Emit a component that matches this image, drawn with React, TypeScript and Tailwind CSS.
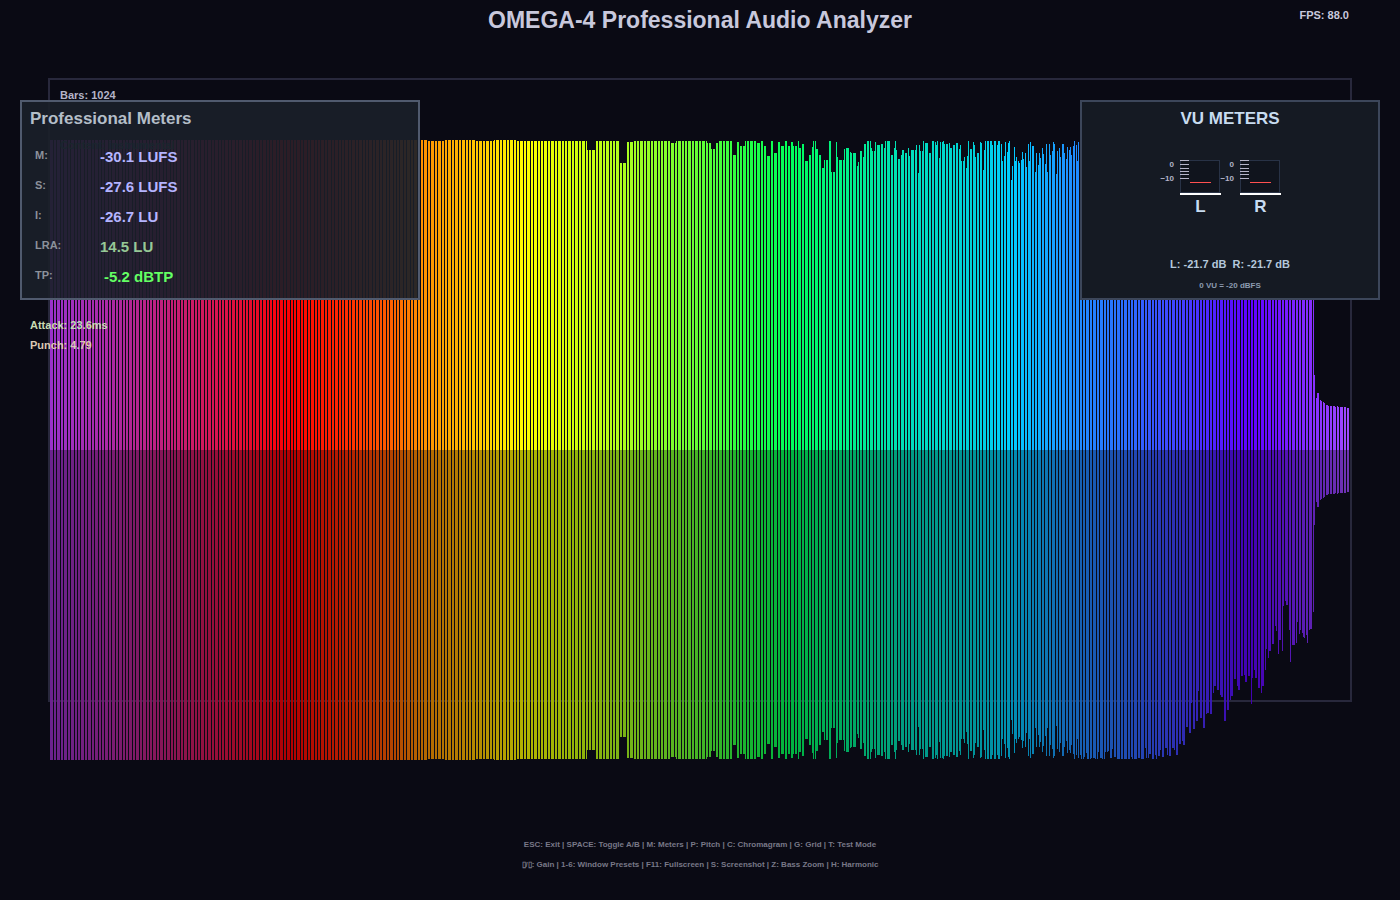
import React from "react";

type Step = [number, number];

const CHART_WIDTH = 1300;
const CENTER = 310;
const BAR_STEP = 1300 / 921;

// Bar heights as [first x, distance below the chart's top]; each holds until the next entry.
const PROFILE: Step[] = [
  [0, 0], [378, 1], [394, 0], [426, 1], [444, 0], [467, 1], [537, 10], [545, 1], [569, 23], [576, 2], [583, 1], [620, 3], [626, 1],
  [657, 3], [661, 9], [665, 3], [669, 1], [682, 15], [686, 2], [690, 6], [695, 1], [706, 3], [710, 1], [713, 6],
  [717, 16], [720, 1], [724, 13], [727, 2], [730, 6], [734, 1], [737, 6], [741, 2], [743, 6], [747, 1], [749, 8],
  [752, 4], [755, 21], [758, 15], [761, 7], [763, 1], [766, 9], [768, 15], [771, 28], [774, 20], [778, 15],
  [779, 1], [781, 32], [785, 2], [787, 17], [789, 20], [794, 9], [796, 8], [799, 12], [801, 13], [806, 26],
  [808, 22], [810, 11], [813, 17], [814, 4], [817, 1], [821, 8], [822, 11], [825, 2], [827, 5], [830, 4],
  [834, 8], [835, 1], [841, 15], [844, 8], [845, 1], [846, 10], [848, 19], [851, 15], [852, 10], [854, 13],
  [857, 17], [858, 8], [859, 16], [861, 10], [864, 13], [865, 10], [866, 5], [868, 33], [869, 5], [870, 11],
  [873, 1], [874, 3], [878, 2], [879, 13], [881, 4], [882, 1], [885, 2], [886, 5], [887, 1], [889, 18], [890, 2],
  [893, 1], [894, 4], [898, 13], [899, 3], [900, 8], [903, 5], [906, 3], [909, 9], [910, 5], [911, 21], [914, 17],
  [916, 28], [917, 16], [918, 1], [920, 9], [922, 2], [924, 5], [925, 17], [926, 13], [929, 2], [931, 3],
  [932, 30], [934, 10], [935, 1], [942, 5], [944, 1], [946, 5], [948, 1], [951, 4], [952, 21], [953, 16],
  [955, 2], [956, 12], [958, 3], [959, 1], [960, 40], [962, 26], [963, 7], [965, 21], [966, 17], [967, 21],
  [969, 23], [970, 20], [972, 12], [973, 19], [975, 13], [976, 27], [977, 4], [979, 21], [980, 2], [982, 6],
  [984, 32], [986, 13], [987, 25], [989, 13], [990, 18], [991, 8], [993, 14], [994, 24], [996, 4], [997, 32],
  [998, 4], [1000, 15], [1001, 11], [1003, 2], [1004, 4], [1005, 34], [1007, 11], [1008, 8], [1010, 17],
  [1011, 1], [1012, 4], [1014, 13], [1015, 19], [1017, 7], [1018, 10], [1020, 7], [1021, 15], [1022, 6],
  [1024, 1], [1025, 5], [1027, 21], [1028, 2], [1029, 5], [1031, 1], [1034, 3], [1035, 7], [1037, 1], [1041, 2],
  [1045, 1], [1048, 8], [1049, 2], [1052, 1], [1055, 8], [1058, 9], [1059, 2], [1062, 11], [1063, 3], [1066, 1],
  [1073, 1], [1080, 3], [1082, 1], [1087, 7], [1088, 2], [1091, 1], [1095, 12], [1096, 2], [1099, 6], [1101, 1],
  [1104, 5], [1106, 1], [1108, 4],
  [1110, 10], [1111, 7], [1112, 3], [1114, 13], [1115, 12], [1117, 5], [1118, 13], [1119, 4], [1121, 8],
  [1122, 12], [1124, 10], [1125, 2], [1126, 5], [1128, 17], [1129, 16], [1131, 13], [1132, 19], [1133, 15],
  [1135, 20], [1136, 33], [1138, 22], [1139, 27], [1141, 57], [1142, 21], [1143, 31], [1145, 34], [1146, 39],
  [1148, 69], [1149, 55], [1150, 42], [1152, 52], [1153, 32], [1155, 43], [1156, 46], [1157, 47], [1159, 31],
  [1160, 46], [1162, 65], [1163, 67], [1164, 74], [1166, 75], [1167, 70], [1169, 87], [1170, 65], [1171, 63],
  [1173, 54], [1174, 39], [1176, 44], [1177, 50], [1180, 60], [1181, 64], [1183, 72], [1184, 81], [1186, 79],
  [1187, 74], [1188, 70], [1190, 75], [1191, 84], [1193, 89], [1194, 85], [1195, 78], [1197, 67], [1198, 84],
  [1200, 76], [1201, 56], [1202, 82], [1204, 90], [1205, 82], [1207, 79], [1208, 72], [1211, 67], [1212, 74],
  [1214, 88], [1215, 90], [1216, 111], [1218, 102], [1219, 109], [1221, 98], [1222, 116], [1224, 145],
  [1225, 134], [1226, 129], [1228, 106], [1229, 120], [1231, 107], [1232, 109], [1233, 154], [1235, 159],
  [1236, 155], [1238, 153], [1239, 130], [1240, 98], [1242, 115], [1245, 118], [1246, 117], [1247, 138],
  [1249, 126], [1250, 130], [1252, 127], [1253, 123], [1254, 122], [1256, 125], [1257, 117], [1259, 130],
  [1260, 131], [1262, 148], [1264, 235], [1266, 258], [1267, 253], [1269, 256], [1270, 260], [1271, 261],
  [1273, 262], [1274, 263], [1276, 265], [1278, 266], [1283, 266], [1285, 267], [1287, 266], [1288, 267],
  [1296, 268],
];

type Stop = [number, number, number, number];

const COLORS: Stop[] = [
  [0, 153, 50, 204], [50, 168, 42, 170], [100, 188, 34, 135], [150, 208, 24, 95], [190, 226, 14, 55],
  [240, 255, 0, 0], [292, 255, 40, 0], [340, 255, 95, 0], [370, 255, 143, 0], [410, 255, 180, 0],
  [475, 255, 255, 0], [520, 215, 255, 8], [570, 175, 255, 30], [640, 110, 255, 50], [700, 30, 255, 70],
  [740, 0, 255, 90], [800, 0, 240, 140], [860, 0, 222, 190], [920, 0, 210, 215], [960, 0, 205, 255],
  [1020, 30, 144, 255], [1080, 45, 105, 255], [1140, 70, 55, 255], [1200, 95, 0, 255],
  [1240, 120, 30, 255], [1299, 160, 75, 255],
];

function colorAt(x: number, gain: number) {
  let i = 0;
  while (i < COLORS.length - 2 && COLORS[i + 1][0] <= x) i++;
  const a = COLORS[i];
  const b = COLORS[i + 1];
  const t = (x - a[0]) / (b[0] - a[0]);
  const mix = (k: 1 | 2 | 3) => Math.round((a[k] + (b[k] - a[k]) * t) * gain);
  return `rgb(${mix(1)} ${mix(2)} ${mix(3)})`;
}

function insetAt(x: number) {
  let inset = 0;
  for (const [start, value] of PROFILE) {
    if (start > x) break;
    inset = value;
  }
  return inset;
}

const BARS = Array.from({ length: 921 }, (_, i) => {
  const x = Math.floor(i * BAR_STEP);
  return { x, inset: insetAt(x) };
});

function Spectrum() {
  return (
    <svg
      role="img"
      aria-label="Audio spectrum"
      className="absolute left-0 top-[60px] h-[620px] w-full"
      viewBox={`0 0 ${CHART_WIDTH} 620`}
      preserveAspectRatio="none"
      shapeRendering="crispEdges"
    >
      {BARS.map(({ x, inset }) => (
        <g key={x}>
          <rect x={x} y={inset} width={1} height={CENTER - inset} fill={colorAt(x, 1)} />
          <rect x={x} y={CENTER} width={1} height={CENTER - inset} fill={colorAt(x, 0.7)} />
        </g>
      ))}
    </svg>
  );
}

const READINGS = [
  { label: "M:", value: "-30.1 LUFS", tone: "text-[#b4b4ff]" },
  { label: "S:", value: "-27.6 LUFS", tone: "text-[#b4b4ff]" },
  { label: "I:", value: "-26.7 LU", tone: "text-[#b4b4ff]" },
  { label: "LRA:", value: "14.5 LU", tone: "text-[#96c896]" },
  { label: "TP:", value: "-5.2 dBTP", tone: "pl-1 text-[#64ff64]" },
];

function ProfessionalMeters() {
  return (
    <section className="absolute left-5 top-[100px] h-[200px] w-[400px] border-2 border-[#505a6e] bg-[#1a1f29]/92 px-2 pt-[5px]">
      <h2 className="text-[17px] leading-6 text-[#b4bec8]">Professional Meters</h2>
      <dl className="pt-[11px] pl-[5px]">
        {READINGS.map((r) => (
          <div key={r.label} className="flex h-[30px] items-center">
            <dt className="w-[65px] pb-[3px] text-[11px] text-[#8c919b]">{r.label}</dt>
            <dd className={`text-[15px] ${r.tone}`}>{r.value}</dd>
          </div>
        ))}
      </dl>
    </section>
  );
}

function VuChannel({ name }: { name: string }) {
  return (
    <div className="flex w-[60px] flex-col items-end">
      <svg width="60" height="36" viewBox="0 0 60 36" shapeRendering="crispEdges" className="overflow-visible">
        <rect x="19.5" y="0.5" width="39" height="32" fill="#10141d" stroke="#283246" />
        {[0, 4, 8, 11, 14, 18].map((y) => (
          <rect key={y} x="19" y={y} width="9" height="1" fill="#b4b4c8" />
        ))}
        <rect x="29" y="22" width="21" height="1" fill="#ff5050" />
        <rect x="19" y="33" width="41" height="2" fill="#ffffff" />
        <g fill="#b4b4c8" fontSize="8" fontWeight="700" textAnchor="end">
          <text x="13" y="7">0</text>
          <text x="13" y="21">−10</text>
        </g>
      </svg>
      <span className="w-10 pt-px text-center text-[17px] leading-5 text-[#c8dcf0]">{name}</span>
    </div>
  );
}

function VuMeters() {
  return (
    <section className="absolute right-5 top-[100px] flex h-[200px] w-[300px] flex-col items-center border-2 border-[#3c465a] bg-[#151a23] pt-[5px] text-center">
      <h2 className="text-[17px] leading-6 text-[#c8dcf0]">VU METERS</h2>
      <div className="flex pt-[29px] pr-[19px]">
        <VuChannel name="L" />
        <VuChannel name="R" />
      </div>
      <p className="pt-[39px] text-[11px] leading-4 whitespace-pre text-[#b4c8dc]">{"L: -21.7 dB  R: -21.7 dB"}</p>
      <p className="pt-2 text-[8px] leading-3 text-[#8c9bb0]">0 VU = -20 dBFS</p>
    </section>
  );
}

export default function App() {
  return (
    <div className="relative flex min-h-screen flex-col bg-[#0a0a14] font-['Liberation_Sans',Arial,sans-serif] font-bold">
      <header className="h-[78px] pt-1.5 text-center">
        <h1 className="text-[23px] leading-7 text-[#c8c8dc]">OMEGA-4 Professional Audio Analyzer</h1>
        <p className="absolute top-[7px] right-[51px] text-[11px] leading-4 text-[#c8c8dc]">FPS: 88.0</p>
      </header>

      <main className="relative mx-12 h-[624px] border-2 border-[#28283c]">
        <Spectrum />
        <div className="relative px-2.5 pt-[7px] text-[11px] leading-4">
          <p className="text-[#b4b4c8]">Bars: 1024</p>
          <p className="pt-[34px] text-[#206464]">Content: instrumental</p>
        </div>
      </main>

      <ProfessionalMeters />
      <VuMeters />

      <div className="absolute left-[30px] top-[315px] text-[11px] leading-5">
        <p className="text-[#c8dcb4]">Attack: 23.6ms</p>
        <p className="text-[#dcc8b4]">Punch: 4.79</p>
      </div>

      <footer className="pt-[133px] text-center text-[8px] leading-5 text-[#787887]">
        <p>ESC: Exit | SPACE: Toggle A/B | M: Meters | P: Pitch | C: Chromagram | G: Grid | T: Test Mode</p>
        <p>▯/▯: Gain | 1-6: Window Presets | F11: Fullscreen | S: Screenshot | Z: Bass Zoom | H: Harmonic</p>
      </footer>
    </div>
  );
}
